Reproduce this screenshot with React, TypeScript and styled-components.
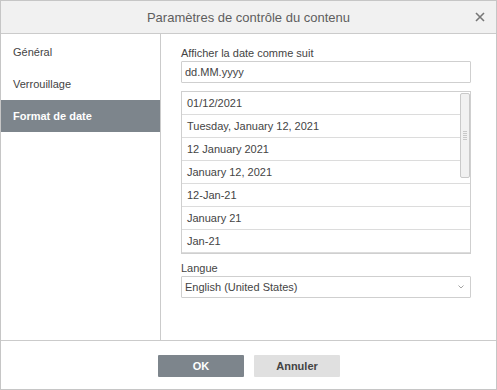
import React from "react";
import styled, { createGlobalStyle } from "styled-components";

const Global = createGlobalStyle`
  html, body { margin: 0; padding: 0; background: #fff; }
  body { font-family: Arial, "Liberation Sans", sans-serif; }
  * { box-sizing: border-box; }
`;

const Dialog = styled.div`
  width: 497px;
  height: 390px;
  border: 1px solid #c6c6c6;
  display: flex;
  flex-direction: column;
  background: #fff;
  color: #444;
  font-size: 11px;
`;

const Header = styled.div`
  position: relative;
  height: 33px;
  flex: none;
  background: #f1f1f1;
  border-bottom: 1px solid #cbcbcb;
  display: flex;
  align-items: center;
  justify-content: center;
  font-size: 13px;
  color: #5e5e5e;
`;

const Close = styled.button`
  position: absolute;
  right: 11px;
  top: 11px;
  width: 10px;
  height: 10px;
  padding: 0;
  border: 0;
  background: transparent;
  display: flex;
  svg { display: block; }
`;

const Body = styled.div`
  flex: 1;
  display: flex;
  min-height: 0;
  border-bottom: 1px solid #cbcbcb;
`;

const Sidebar = styled.div`
  width: 160px;
  flex: none;
  border-right: 1px solid #cbcbcb;
  padding-top: 2px;
  display: flex;
  flex-direction: column;
`;

const NavItem = styled.div<{ $active?: boolean }>`
  height: 32px;
  display: flex;
  align-items: center;
  padding-left: 12px;
  font-size: 11px;
  font-weight: ${(p) => (p.$active ? "bold" : "normal")};
  color: ${(p) => (p.$active ? "#fff" : "#444")};
  background: ${(p) => (p.$active ? "#7d858c" : "transparent")};
`;

const Content = styled.div`
  flex: 1;
  padding: 12px 25px 0 20px;
  display: flex;
  flex-direction: column;
`;

const Label = styled.div<{ $top?: number }>`
  line-height: 15px;
  height: 15px;
  margin-top: ${(p) => p.$top ?? 0}px;
  color: #444;
`;

const Field = styled.div`
  position: relative;
  height: 22px;
  border: 1px solid #cfcfcf;
  border-radius: 1px;
  display: flex;
  align-items: center;
  padding-left: 3px;
  color: #444;
`;

const List = styled.div`
  position: relative;
  margin-top: 8px;
  border: 1px solid #cfcfcf;
  display: flex;
  flex-direction: column;
`;

const Row = styled.div`
  height: 23px;
  padding-left: 5px;
  display: flex;
  align-items: center;
  border-bottom: 1px solid #dcdcdc;
  color: #444;
  &:last-child {
    height: 22px;
    border-bottom: 0;
  }
`;

const Scroll = styled.div`
  position: absolute;
  right: 0px;
  top: 1px;
  width: 10px;
  height: 85px;
  border: 1px solid #c9c9c9;
  border-radius: 2px;
  background: #f1f1f1;
  display: flex;
  align-items: center;
  justify-content: center;
`;

const Grip = styled.div`
  width: 4px;
  height: 9px;
  background: repeating-linear-gradient(
    to bottom,
    #c8c8c8 0px,
    #c8c8c8 1px,
    transparent 1px,
    transparent 2px
  );
`;

const Chevron = styled.span`
  position: absolute;
  right: 6px;
  top: 8px;
  display: flex;
`;

const Footer = styled.div`
  height: 48px;
  flex: none;
  display: flex;
  justify-content: center;
  gap: 10px;
  padding-top: 14px;
  padding-left: 1px;
`;

const Button = styled.button<{ $primary?: boolean }>`
  width: 86px;
  height: 22px;
  border: 0;
  border-radius: 1px;
  font-family: Arial, "Liberation Sans", sans-serif;
  font-size: 11px;
  font-weight: bold;
  background: ${(p) => (p.$primary ? "#7d858c" : "#e0e0e0")};
  color: ${(p) => (p.$primary ? "#fff" : "#444")};
  padding: 0;
`;

const formats = [
  "01/12/2021",
  "Tuesday, January 12, 2021",
  "12 January 2021",
  "January 12, 2021",
  "12-Jan-21",
  "January 21",
  "Jan-21",
];

export default function App() {
  return (
    <>
      <Global />
      <Dialog>
        <Header>
          Paramètres de contrôle du contenu
          <Close aria-label="Fermer">
            <svg width="10" height="10" viewBox="0 0 10 10">
              <path d="M1 1L9 9M9 1L1 9" stroke="#777" strokeWidth="1.6" />
            </svg>
          </Close>
        </Header>
        <Body>
          <Sidebar>
            <NavItem>Général</NavItem>
            <NavItem>Verrouillage</NavItem>
            <NavItem $active>Format de date</NavItem>
          </Sidebar>
          <Content>
            <Label>Afficher la date comme suit</Label>
            <Field>dd.MM.yyyy</Field>
            <List>
              {formats.map((f) => (
                <Row key={f}>{f}</Row>
              ))}
              <Scroll>
                <Grip />
              </Scroll>
            </List>
            <Label $top={7}>Langue</Label>
            <Field>
              English (United States)
              <Chevron>
                <svg width="6" height="4" viewBox="0 0 6 4">
                  <path d="M0.5 0.5L3 3L5.5 0.5" stroke="#999" strokeWidth="0.9" fill="none" />
                </svg>
              </Chevron>
            </Field>
          </Content>
        </Body>
        <Footer>
          <Button $primary>OK</Button>
          <Button>Annuler</Button>
        </Footer>
      </Dialog>
    </>
  );
}
